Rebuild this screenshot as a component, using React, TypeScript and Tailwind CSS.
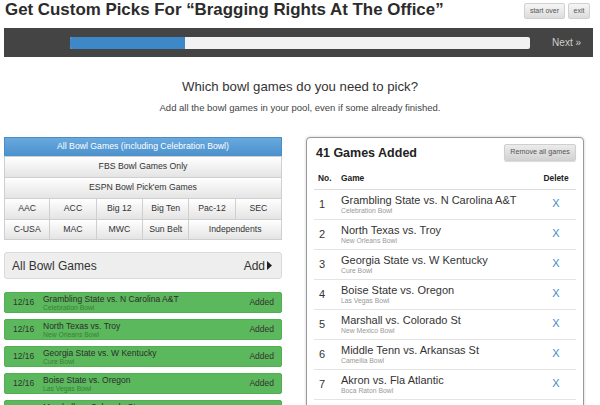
const games = [
  { date: '12/16', name: 'Grambling State vs. N Carolina A&T', bowl: 'Celebration Bowl' },
  { date: '12/16', name: 'North Texas vs. Troy', bowl: 'New Orleans Bowl' },
  { date: '12/16', name: 'Georgia State vs. W Kentucky', bowl: 'Cure Bowl' },
  { date: '12/16', name: 'Boise State vs. Oregon', bowl: 'Las Vegas Bowl' },
  { date: '12/16', name: 'Marshall vs. Colorado St', bowl: 'New Mexico Bowl' },
]

const added = [
  { name: 'Grambling State vs. N Carolina A&T', bowl: 'Celebration Bowl' },
  { name: 'North Texas vs. Troy', bowl: 'New Orleans Bowl' },
  { name: 'Georgia State vs. W Kentucky', bowl: 'Cure Bowl' },
  { name: 'Boise State vs. Oregon', bowl: 'Las Vegas Bowl' },
  { name: 'Marshall vs. Colorado St', bowl: 'New Mexico Bowl' },
  { name: 'Middle Tenn vs. Arkansas St', bowl: 'Camellia Bowl' },
  { name: 'Akron vs. Fla Atlantic', bowl: 'Boca Raton Bowl' },
  { name: 'LA Tech vs. S Methodist', bowl: 'Frisco Bowl' },
]

const confRow1 = ['AAC', 'ACC', 'Big 12', 'Big Ten', 'Pac-12', 'SEC']
const confRow2 = ['C-USA', 'MAC', 'MWC', 'Sun Belt']

const grayBtn =
  'flex items-center justify-center border border-[#cfcfcf] bg-gradient-to-b from-[#ffffff] to-[#e4e4e4] text-[8.7px] text-[#333]'

function Triangle() {
  return (
    <svg width="5" height="9" viewBox="0 0 5 9" className="ml-[2px]">
      <polygon points="0,0 5,4.5 0,9" fill="#222" />
    </svg>
  )
}

export default function App() {
  return (
    <div className="w-[600px] h-[405px] overflow-hidden bg-white font-['Liberation_Sans',Arial,sans-serif] text-[#333]">
      {/* header */}
      <div className="flex h-[28px] items-start justify-between">
        <h1 className="pl-[5px] text-[16.9px] font-bold leading-[20px] text-[#2b2b2b]">
          Get Custom Picks For “Bragging Rights At The Office”
        </h1>
        <div className="mr-[10px] mt-[3px] flex gap-[3px]">
          <button className="h-[16px] w-[41px] rounded-[2px] border border-[#d0d0d0] bg-gradient-to-b from-[#f6f6f6] to-[#dcdcdc] text-[7px] text-[#555]">
            start over
          </button>
          <button className="h-[16px] w-[22px] rounded-[2px] border border-[#d0d0d0] bg-gradient-to-b from-[#f6f6f6] to-[#dcdcdc] text-[7px] text-[#555]">
            exit
          </button>
        </div>
      </div>

      {/* progress bar */}
      <div className="ml-[4px] flex h-[29px] w-[589px] items-center bg-[#444]">
        <div className="ml-[66px] h-[12px] w-[460px] overflow-hidden rounded-[2px] bg-[#f2f2f2]">
          <div className="h-full w-[115px] bg-[#3f88c8]" />
        </div>
        <span className="ml-auto mr-[12px] text-[10px] text-[#cfcfcf]">Next »</span>
      </div>

      <h2 className="mt-[22px] text-center text-[13.2px] leading-[16px] text-[#333]">
        Which bowl games do you need to pick?
      </h2>
      <p className="mt-[7px] text-center text-[9.5px] leading-[12px] text-[#444]">
        Add all the bowl games in your pool, even if some already finished.
      </p>

      <div className="mt-[23px] grid grid-cols-[278px_278px] gap-x-[24px] pl-[4px]">
        {/* left column */}
        <div>
          <div className="flex flex-col">
            <button className="flex h-[20px] items-center justify-center border border-[#4a8cc4] bg-gradient-to-b from-[#68a9de] to-[#4b91cd] text-[8.7px] text-white">
              All Bowl Games (including Celebration Bowl)
            </button>
            <button className={grayBtn + ' -mt-px h-[22px]'}>FBS Bowl Games Only</button>
            <button className={grayBtn + ' -mt-px h-[22px]'}>ESPN Bowl Pick'em Games</button>
            <div className="-mt-px grid grid-cols-6">
              {confRow1.map((c, i) => (
                <button key={c} className={grayBtn + ' h-[22px]' + (i > 0 ? ' -ml-px' : '')}>
                  {c}
                </button>
              ))}
            </div>
            <div className="-mt-px grid grid-cols-6">
              {confRow2.map((c, i) => (
                <button key={c} className={grayBtn + ' h-[21px]' + (i > 0 ? ' -ml-px' : '')}>
                  {c}
                </button>
              ))}
              <button className={grayBtn + ' col-span-2 -ml-px h-[21px]'}>Independents</button>
            </div>
          </div>

          <div className="mt-[12px] flex h-[27px] items-center justify-between rounded-[3px] border border-[#dadada] bg-[#eeeeee] pl-[7px] pr-[9px] text-[12px] text-[#333]">
            <span>All Bowl Games</span>
            <span className="flex items-center">
              Add
              <Triangle />
            </span>
          </div>

          <div className="mt-[13px] flex flex-col gap-[6px]">
            {games.map((g) => (
              <div
                key={g.name}
                className="flex h-[21px] items-center rounded-[2px] border border-[#52b052] bg-[#5cb85c] pr-[7px]"
              >
                <span className="w-[38px] pl-[8px] text-[8.5px] text-[#333]">{g.date}</span>
                <div className="flex flex-1 flex-col self-start pt-[1px]">
                  <span className="text-[8.5px] leading-[10px] text-[#2d2d2d]">{g.name}</span>
                  <span className="text-[6.8px] leading-[8px] text-[#3a7f3a]">{g.bowl}</span>
                </div>
                <span className="text-[8.5px] text-[#333]">Added</span>
              </div>
            ))}
          </div>
        </div>

        {/* right column */}
        <div className="h-[300px] rounded-[4px] border border-[#9a9a9a] bg-white shadow-[0_0_3px_rgba(0,0,0,0.2)]">
          <div className="flex items-start justify-between pl-[9px] pr-[7px] pt-[6px]">
            <span className="mt-[1px] text-[12.5px] font-bold leading-[16px] text-[#222]">41 Games Added</span>
            <button className="h-[17px] w-[72px] rounded-[2px] border border-[#cfcfcf] bg-gradient-to-b from-[#ececec] to-[#d2d2d2] text-[7.2px] text-[#555] shadow-[0_1px_1px_rgba(0,0,0,0.15)]">
              Remove all games
            </button>
          </div>
          <div className="mx-[7px] mt-[7px]">
            <div className="flex h-[22px] items-center border-b border-[#dddddd] text-[8.4px] font-bold text-[#222]">
              <span className="w-[27px] pl-[4px]">No.</span>
              <span className="flex-1">Game</span>
              <span className="w-[40px] text-center">Delete</span>
            </div>
            {added.map((g, i) => (
              <div key={g.name} className="flex h-[30px] items-center border-b border-[#e4e4e4]">
                <span className="w-[27px] pl-[5px] text-[11px] text-[#333]">{i + 1}</span>
                <div className="flex flex-1 flex-col">
                  <span className="text-[11px] leading-[13px] text-[#333]">{g.name}</span>
                  <span className="text-[6.8px] leading-[8px] text-[#999]">{g.bowl}</span>
                </div>
                <span className="w-[40px] pb-[3px] text-center text-[11px] leading-[13px] text-[#428bca]">X</span>
              </div>
            ))}
          </div>
        </div>
      </div>
    </div>
  )
}
